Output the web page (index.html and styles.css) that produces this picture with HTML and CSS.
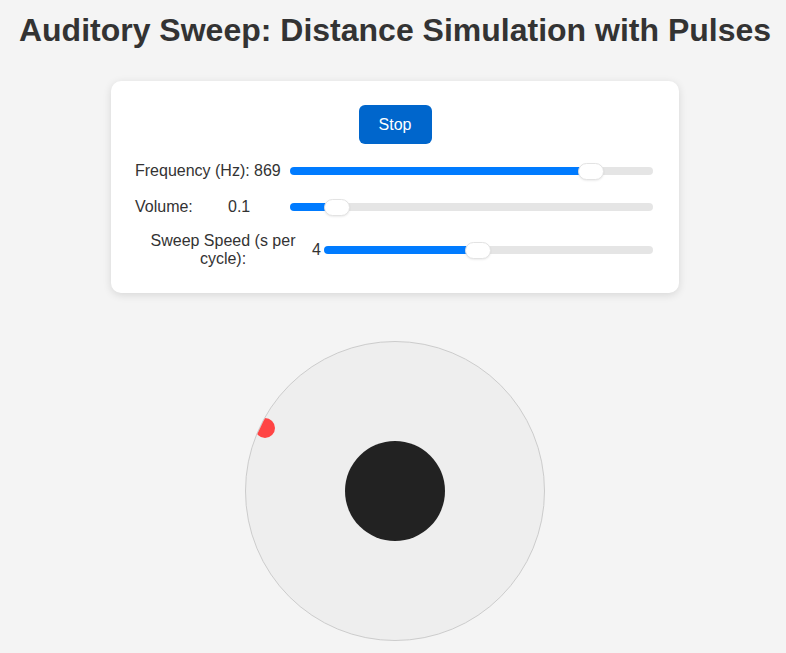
FILE: index.html
```html
<!DOCTYPE html>
<html lang="en">
<head>
<meta charset="utf-8">
<title>Auditory Sweep</title>
<link rel="stylesheet" href="styles.css">
</head>
<body>
  <h1 class="title">Auditory Sweep: Distance Simulation with Pulses</h1>
  <div class="card">
    <div class="btn-row"><button class="btn">Stop</button></div>
    <div class="control control-freq">
      <span class="name name-freq">Frequency (Hz):</span>
      <span class="val val-freq">869</span>
      <input class="slider" type="range" min="100" max="1000" value="869" style="--p: 85.4%">
    </div>
    <div class="control control-vol">
      <span class="name name-vol">Volume:</span>
      <span class="val val-vol">0.1</span>
      <input class="slider" type="range" min="0" max="1" step="0.01" value="0.1" style="--p: 10%">
    </div>
    <div class="control control-speed">
      <span class="name name-speed">Sweep Speed (s per cycle):</span>
      <span class="val val-speed">4</span>
      <input class="slider" type="range" min="0.5" max="8" step="0.1" value="4" style="--p: 46.7%">
    </div>
  </div>
  <div class="field">
    <div class="pulse"></div>
    <div class="listener"></div>
  </div>
</body>
</html>
```
FILE: styles.css
```css
html, body {
  margin: 0;
  padding: 0;
}
body {
  background: #f4f4f4;
  font-family: "Liberation Sans", Arial, Helvetica, sans-serif;
  color: #333;
  padding: 0 0 0 4px;
  display: flex;
  flex-direction: column;
  align-items: center;
}
.title {
  font-size: 32px;
  font-weight: bold;
  margin: 12px 0 0;
  line-height: 36px;
  color: #333;
  text-align: center;
  white-space: nowrap;
}
.card {
  margin-top: 33px;
  width: 520px;
  background: #fff;
  border-radius: 10px;
  padding: 24px 24px 25px 24px;
  box-shadow: 0 2px 8px rgba(0,0,0,0.12);
}
.btn-row {
  display: flex;
  justify-content: center;
}
.btn {
  background: #0066cc;
  color: #fff;
  border: none;
  border-radius: 6px;
  font-family: "Liberation Sans", Arial, sans-serif;
  font-size: 16px;
  width: 73px;
  height: 39px;
  padding: 0;
}
.control {
  display: flex;
  align-items: center;
  font-size: 16px;
  line-height: 18px;
}
.control-freq { margin-top: 18px; }
.control-vol { margin-top: 18px; }
.control-speed { margin-top: 16px; }
.name-freq { width: 119px; white-space: nowrap; }
.name-vol { width: 93px; }
.name-speed {
  width: 170px;
  padding-left: 6px;
  box-sizing: border-box;
  text-align: center;
}
.val-freq { width: 36px; }
.val-vol { width: 27px; }
.val-speed { width: 12px; margin-left: 7px; }
.val-vol + .slider { margin-left: 35px; }
.slider {
  -webkit-appearance: none;
  appearance: none;
  flex: 1;
  height: 8px;
  margin: 0 2px 0 0;
  border-radius: 4px;
  background: linear-gradient(to right, #007bff 0, #007bff var(--p), #e5e5e5 var(--p), #e5e5e5 100%);
  outline: none;
}
.slider::-webkit-slider-thumb {
  -webkit-appearance: none;
  width: 26px;
  height: 17px;
  border-radius: 9px;
  background: #fff;
  border: 1px solid #e3e3e3;
  box-shadow: 0 1px 2px rgba(0,0,0,0.08);
}
.field {
  margin-top: 48px;
  position: relative;
  width: 298px;
  height: 298px;
  border: 1px solid #ccc;
  border-radius: 50%;
  background: #eee;
  overflow: hidden;
  display: flex;
  align-items: center;
  justify-content: center;
}
.listener {
  width: 100px;
  height: 100px;
  border-radius: 50%;
  background: #222;
}
.pulse {
  position: absolute;
  left: 9px;
  top: 76px;
  width: 20px;
  height: 20px;
  border-radius: 50%;
  background: #ff4444;
}
```
